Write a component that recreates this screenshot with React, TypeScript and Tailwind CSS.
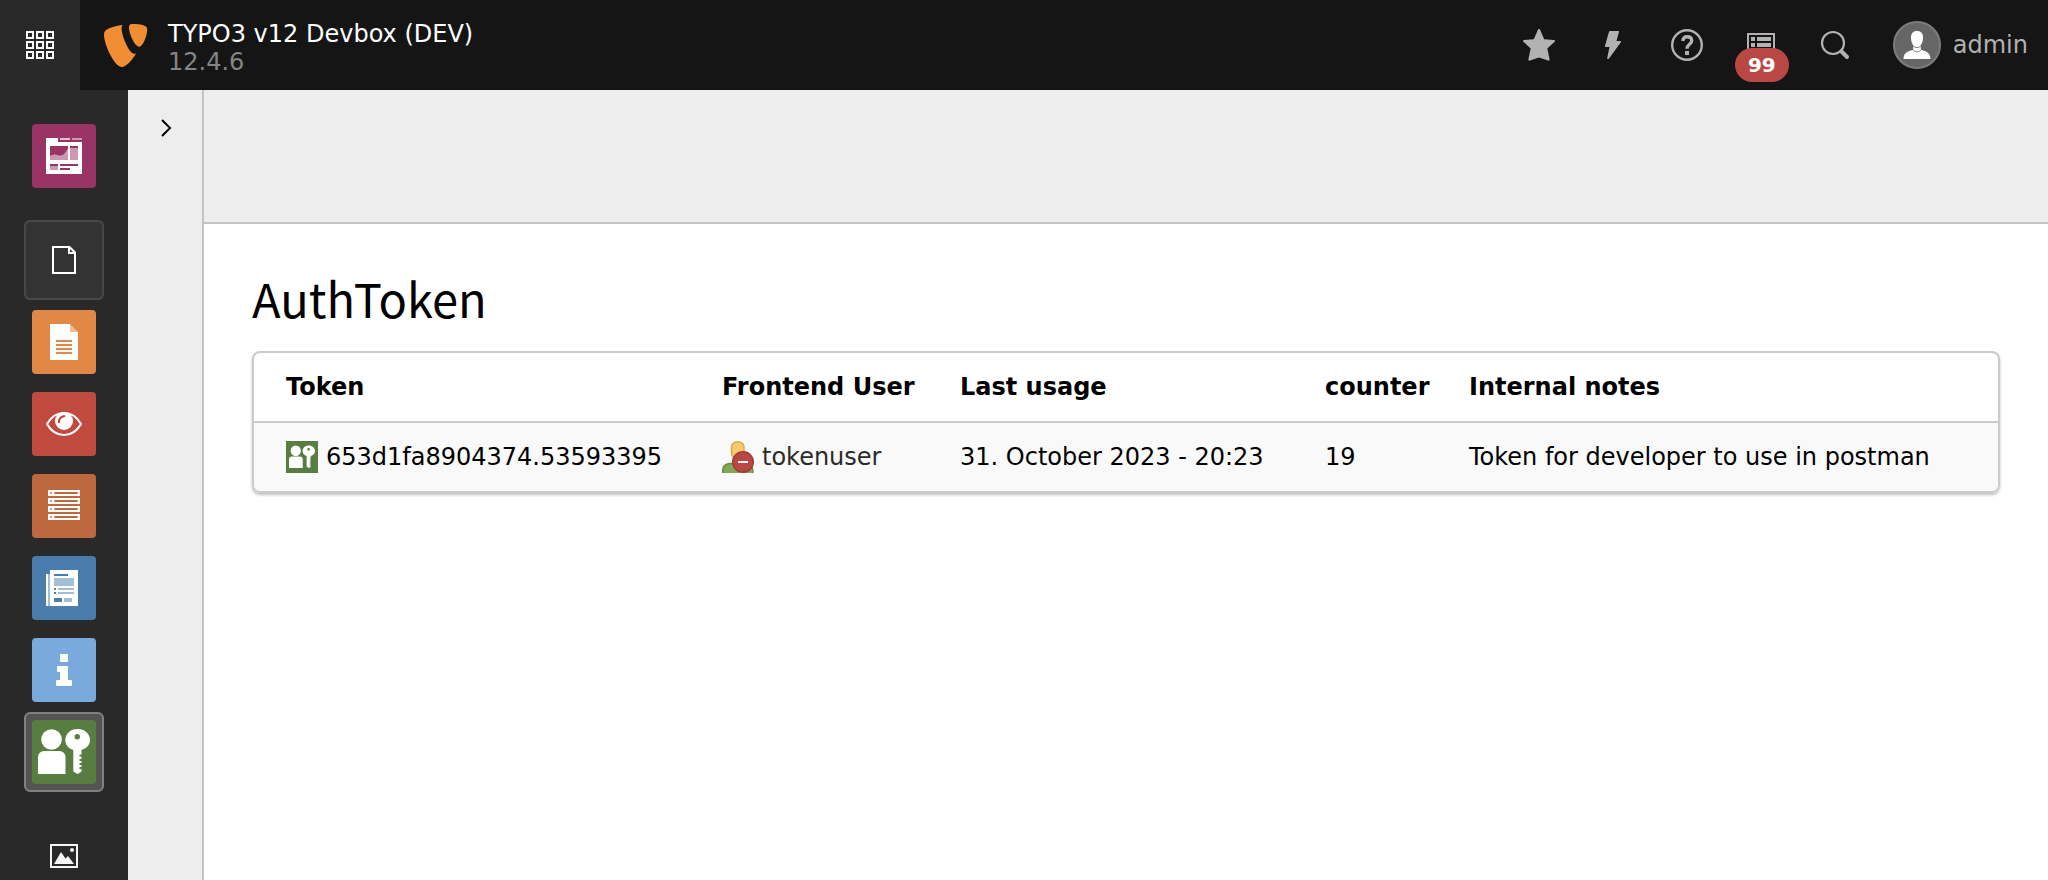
import { ReactNode } from "react";

interface ModuleItem {
    id: string;
    label: string;
    icon: ReactNode;
    boxClass?: string;
}

function Typo3Logo() {
    return (
        <svg className="w-11 h-11.5" viewBox="0 0 44 46" fill="#f18e33" aria-hidden="true">
            <path d="M32.2 31.5c-.6.2-1.2.3-1.8.3C24.8 31.8 17.6 13 17.6 6.8c0-2.5.5-3.2 1.3-3.8C11.8 3.8 3.5 6.1.9 9.2.3 10 0 11.2 0 12.7 0 22.5 10.4 45 18 45c3.500 0 9.300-5.700 14.200-13.500z" />
            <path d="M29 2c6.700 0 14.200 1.100 14.200 5.100 0 8-5 17.600-7.700 17.600-4.700 0-10.500-12.800-10.500-19.300C25 2.600 26.100 2 29 2z" />
        </svg>
    );
}

function GridIcon() {
    return (
        <svg className="w-7 h-7" viewBox="0 0 28 28" fill="none" stroke="#fff" strokeWidth="2" aria-hidden="true">
            {[0, 10, 20].map((y) =>
                [0, 10, 20].map((x) => <rect key={`${x}-${y}`} x={x + 1} y={y + 1} width="6" height="6" />)
            )}
        </svg>
    );
}

function DashboardIcon() {
    return (
        <svg className="w-16 h-16" viewBox="0 0 64 64" aria-hidden="true">
            <rect width="64" height="64" rx="4" fill="#9a3366" />
            <path fill="#fff" d="M14 14h12v4h24v32H14z" />
            <path fill="#e1c2d2" d="M28 14h10v2H28z" />
            <path fill="#cc99b3" d="M40 14h10v2H40zM18 22h18v14H18zM38 24h8v12h-8zM18 42h8v4h-8z" />
            <path fill="#9a3366" d="M18 22h18v2c-2 4-4 7-7 7.500-3 .5-4-1.500-6.500-1-1.500.2-3 .8-4.500 1.500zM38 22h8v2h-8zM18 40h8v2h-8zM28 40h18v2H28zM28 44h10v2H28z" />
        </svg>
    );
}

function PageOutlineIcon() {
    return (
        <svg className="w-8 h-8" viewBox="0 0 32 32" aria-hidden="true">
            <path fill="none" stroke="#fff" strokeWidth="2" d="M5 3h16.500L27 8.500V29H5zM21 3v6h6" />
        </svg>
    );
}

function PageIcon() {
    return (
        <svg className="w-16 h-16" viewBox="0 0 64 64" aria-hidden="true">
            <rect width="64" height="64" rx="4" fill="#e28847" />
            <path fill="#fff" d="M18 14h20v8h8v28H18z" />
            <path fill="#f1bc97" d="M38 14l8 8h-8z" />
            <path fill="#e28847" d="M24 30h16v2H24zM24 34h16v2H24zM24 38h16v2H24zM24 42h16v2H24z" />
        </svg>
    );
}

function ViewIcon() {
    return (
        <svg className="w-16 h-16" viewBox="0 0 64 64" aria-hidden="true">
            <rect width="64" height="64" rx="4" fill="#c14a3f" />
            <path fill="none" stroke="#fff" strokeWidth="2" d="M15 32c4-7 10-11 17-11s13 4 17 11c-4 7-10 11-17 11s-13-4-17-11z" />
            <circle cx="32" cy="29" r="9" fill="#fff" />
            <path fill="none" stroke="#c14a3f" strokeWidth="2" d="M27 31c-.500-4 2-6.500 6-7" />
        </svg>
    );
}

function ListIcon() {
    return (
        <svg className="w-16 h-16" viewBox="0 0 64 64" aria-hidden="true">
            <rect width="64" height="64" rx="4" fill="#bd693f" />
            {[16, 24, 32, 40].map((y) => (
                <g key={y}>
                    <rect x="16" y={y} width="32" height="6" fill="#fff" />
                    <rect x="18" y={y + 2} width="2" height="2" fill="#d59c80" />
                    <rect x="22" y={y + 2} width="24" height="2" fill="#d59c80" />
                    <rect x="23" y={y + 2} width="22" height="2" fill="#bd693f" />
                </g>
            ))}
        </svg>
    );
}

function NewsIcon() {
    return (
        <svg className="w-16 h-16" viewBox="0 0 64 64" aria-hidden="true">
            <rect width="64" height="64" rx="4" fill="#4a7dac" />
            <path fill="#fff" d="M14 18h2v32h-2zM18 14h28v36H18z" />
            <path fill="#a4bed6" d="M16 18h2v32h-2zM22 22h20v8H22zM26 32h16v2H26zM26 36h16v2H26zM32 42h8v4h-8z" />
            <path fill="#4a7dac" d="M22 18h14v2H22zM22 32h2v2h-2zM22 36h2v2h-2zM22 42h8v4h-8z" />
        </svg>
    );
}

function InfoIcon() {
    return (
        <svg className="w-16 h-16" viewBox="0 0 64 64" aria-hidden="true">
            <rect width="64" height="64" rx="4" fill="#7aa9dc" />
            <rect x="28" y="16" width="8" height="8" rx="1" fill="#fff" />
            <path fill="#fff" d="M26 28h9a1 1 0 0 1 1 1v13h3a1 1 0 0 1 1 1v4a1 1 0 0 1-1 1H25a1 1 0 0 1-1-1v-4a1 1 0 0 1 1-1h3v-8h-2a1 1 0 0 1-1-1v-4a1 1 0 0 1 1-1z" />
        </svg>
    );
}

function TokenIcon({ className, radius = 0 }: { className: string; radius?: number }) {
    return (
        <svg className={className} viewBox="0 0 64 64" aria-hidden="true">
            <rect width="64" height="64" rx={radius} fill="#587d41" />
            <circle cx="19.5" cy="19.5" r="10.3" fill="#fff" />
            <path fill="#fff" d="M6 54V37a6 6 0 0 1 6-6h15.500a6 6 0 0 1 6 6v17z" />
            <path
                fill="#fff"
                fillRule="evenodd"
                d="M45.500 9C52.500 9 58 13.800 58 20c0 5-3.500 8.500-8.500 10v4.500h-2v2h2v2.500h-2v2h2v2h-2v2h2v2h-2v2h2v2.500L45.500 54 41.300 51.500V30c-4.800-1.500-8-5-8-10 0-6.200 5.200-11 12.200-11zM45.300 14a2.700 2.700 0 1 0 0 5.400 2.700 2.700 0 0 0 0-5.400z"
            />
        </svg>
    );
}

function ImageIcon() {
    return (
        <svg className="w-8 h-8" viewBox="0 0 32 32" aria-hidden="true">
            <rect x="3" y="5" width="26" height="22" fill="none" stroke="#f5f5f5" strokeWidth="2" />
            <path fill="#f5f5f5" d="M6 24l7-12 4.500 6.500L20 16l6 8z" />
            <circle cx="24" cy="10" r="2" fill="#f5f5f5" />
        </svg>
    );
}

function FrontendUserIcon() {
    return (
        <svg className="w-8 h-8" viewBox="0 0 32 32" aria-hidden="true">
            <path fill="#83a657" stroke="#6a8a45" strokeWidth="1.5" d="M.8 32v-3c0-4 3-6 7-6.500h16c4 .5 7 2.500 7 6.500v3" />
            <path fill="#f9cb6c" stroke="#d2a95a" strokeWidth="1.5" d="M9.500 6.500C9.500 3 12 .8 15.700.8S22 3 22 6.500v5c0 2.500-.7 4-1.500 5V23h-9v-6.500c-1-1-2-2.500-2-5z" />
            <circle cx="21" cy="21" r="10.3" fill="#b94743" stroke="#a03b38" strokeWidth="1.4" />
            <path fill="#fff" d="M16 20h10v2H16z" />
        </svg>
    );
}

const moduleGroups: ModuleItem[][] = [
    [{ id: "dashboard", label: "Dashboard", icon: <DashboardIcon /> }],
    [
        { id: "web", label: "Web", icon: <PageOutlineIcon />, boxClass: "border-[#484848] bg-[#333333]" },
        { id: "page", label: "Page", icon: <PageIcon /> },
        { id: "view", label: "View", icon: <ViewIcon /> },
        { id: "list", label: "List", icon: <ListIcon /> },
        { id: "news", label: "News", icon: <NewsIcon /> },
        { id: "info", label: "Info", icon: <InfoIcon /> },
        {
            id: "authtoken",
            label: "AuthToken",
            icon: <TokenIcon className="w-16 h-16" radius={4} />,
            boxClass: "border-[#808080] bg-[#535353]",
        },
    ],
    [{ id: "file", label: "File", icon: <ImageIcon /> }],
];

const tokens = [
    {
        token: "653d1fa8904374.53593395",
        user: "tokenuser",
        lastUsage: "31. October 2023 - 20:23",
        counter: 19,
        notes: "Token for developer to use in postman",
    },
];

function Topbar() {
    return (
        <header className="flex items-center h-[90px] shrink-0 bg-[#151515] text-[#b2b2b2]">
            <button type="button" aria-label="Toggle module menu" className="flex items-center justify-center w-20 h-full bg-[#292929]">
                <GridIcon />
            </button>
            <a href="#" className="flex items-center gap-5 pl-6 text-white">
                <Typo3Logo />
                <span className="flex flex-col pt-1.5 leading-7">
                    <span>TYPO3 v12 Devbox (DEV)</span>
                    <span className="text-[#858585]">12.4.6</span>
                </span>
            </a>

            <div className="flex items-center h-full ml-auto">
                <button type="button" aria-label="Bookmarks" className="flex items-center justify-center w-[74px] h-full">
                    <svg className="w-8 h-8" viewBox="0 0 32 32" fill="#b2b2b2" aria-hidden="true">
                        <path d="M17 .6l4.200 9.600 9.800.8c1 .1 1.300 1 .6 1.700l-7.300 6.800 2.300 10.800c.2 1-.6 1.700-1.600 1.200L16 28.600l-9 2.900c-1 .5-1.800-.2-1.600-1.200l2.300-10.800L.4 12.700c-.7-.7-.4-1.600.6-1.700l9.800-.8L15 .6c.5-.9 1.500-.9 2 0z" />
                    </svg>
                </button>
                <button type="button" aria-label="Clear cache" className="flex items-center justify-center w-[74px] h-full">
                    <svg className="w-8 h-8" viewBox="0 0 32 32" fill="#b2b2b2" aria-hidden="true">
                        <path d="M13 2h8.500c.5 0 .7.3.5.8L19.500 12H23c1 0 1.200.6.7 1.400L12 29.500c-.6.8-2 .6-1.800-.5L12.500 18H9c-.8 0-1.200-.4-1-1.200L12 2.800c.2-.5.5-.8 1-.8z" />
                    </svg>
                </button>
                <button type="button" aria-label="Help" className="flex items-center justify-center w-[74px] h-full">
                    <svg className="w-8 h-8" viewBox="0 0 32 32" fill="none" stroke="#b2b2b2" aria-hidden="true">
                        <circle cx="16" cy="16" r="14.8" strokeWidth="2.4" />
                        <path strokeWidth="3.4" d="M11.800 12c.3-3 2-4.300 4.400-4.300 2.800 0 4.500 1.500 4.500 4 0 3.700-4.700 3.500-4.700 8" />
                        <path strokeWidth="4" d="M16 22v4" />
                    </svg>
                </button>
                <button type="button" aria-label="System information, 99 messages" className="relative flex items-center justify-center w-[74px] h-full">
                    <svg className="w-8 h-8" viewBox="0 0 32 32" aria-hidden="true">
                        <rect x="3" y="5" width="26" height="22" fill="none" stroke="#b2b2b2" strokeWidth="2" />
                        <path fill="#b2b2b2" d="M6 8h4v4H6zM12 8h14v4H12zM6 14h4v4H6zM12 14h14v4H12zM6 20h4v4H6zM12 20h14v4H12z" />
                    </svg>
                    <span className="absolute top-12 left-[11px] w-[54px] h-[34px] rounded-full bg-[#b94743] text-center text-xl leading-[34px] font-bold text-white">
                        99
                    </span>
                </button>
                <button type="button" aria-label="Search" className="flex items-center justify-center w-[74px] h-full">
                    <svg className="w-8 h-8" viewBox="0 0 32 32" fill="none" stroke="#b2b2b2" strokeLinecap="round" aria-hidden="true">
                        <circle cx="14" cy="14" r="11" strokeWidth="2.2" />
                        <path strokeWidth="4" d="M22.500 22.500L28 28" />
                    </svg>
                </button>
                <button type="button" className="flex items-center gap-3 h-full pl-[21px] pr-5">
                    <svg className="w-12 h-12" viewBox="0 0 48 48" aria-hidden="true">
                        <circle cx="24" cy="24" r="23" fill="#666" stroke="#7c7c7c" strokeWidth="2" />
                        <path fill="#fff" d="M24 10c4 0 6 2.500 6 6.500 0 3.500-.7 5.500-2.200 7.500v4.500c2 1.500 9.700 1.500 9.700 9.500h-27c0-8 7.700-8 9.700-9.500V24c-1.500-2-2.200-4-2.200-7.500 0-4 2-6.500 6-6.500z" />
                        <path fill="none" stroke="#666" strokeWidth=".8" d="M20 25c2.500 2 5.500 2 8 0M19.500 28.500c2 3 7 3 9 0" />
                    </svg>
                    <span>admin</span>
                </button>
            </div>
        </header>
    );
}

function ModuleMenu() {
    return (
        <nav aria-label="Module menu" className="flex flex-col items-center gap-6 w-32 shrink-0 pt-[26px] bg-[#292929] overflow-hidden">
            {moduleGroups.map((group, index) => (
                <div key={index} className="flex flex-col gap-0.5">
                    {group.map((item) => (
                        <button
                            key={item.id}
                            type="button"
                            aria-label={item.label}
                            className={`flex items-center justify-center w-20 h-20 rounded-md border-2 ${item.boxClass ?? "border-transparent"}`}
                        >
                            {item.icon}
                        </button>
                    ))}
                </div>
            ))}
        </nav>
    );
}

function TokenTable() {
    return (
        <div className="rounded-lg border-2 border-[#cbcbcb] overflow-hidden shadow-[0_2px_3px_rgba(0,0,0,0.25)]">
            <table className="w-full table-fixed text-left leading-9">
                <thead>
                    <tr className="border-b-2 border-[#cbcbcb]">
                        <th className="w-[448px] py-4 pl-8">Token</th>
                        <th className="w-[238px] py-4 pl-5 whitespace-nowrap">Frontend User</th>
                        <th className="w-[365px] py-4 pl-5">Last usage</th>
                        <th className="w-36 py-4 pl-5">counter</th>
                        <th className="py-4 pl-5">Internal notes</th>
                    </tr>
                </thead>
                <tbody>
                    {tokens.map((row) => (
                        <tr key={row.token} className="bg-[#f9f9f9]">
                            <td className="py-4 pl-8">
                                <span className="flex items-center gap-2">
                                    <TokenIcon className="w-8 h-8" />
                                    {row.token}
                                </span>
                            </td>
                            <td className="py-4 pl-5">
                                <a href="#" className="flex items-center gap-2 text-[#2b2b2b]">
                                    <FrontendUserIcon />
                                    {row.user}
                                </a>
                            </td>
                            <td className="py-4 pl-5">{row.lastUsage}</td>
                            <td className="py-4 pl-5">{row.counter}</td>
                            <td className="py-4 pl-5 whitespace-nowrap">{row.notes}</td>
                        </tr>
                    ))}
                </tbody>
            </table>
        </div>
    );
}

export default function App() {
    return (
        <div className="flex flex-col h-screen overflow-hidden bg-white text-2xl text-black font-['Verdana','DejaVu_Sans',sans-serif]">
            <Topbar />
            <div className="flex flex-1 min-h-0">
                <ModuleMenu />

                {/* Collapsed page tree */}
                <aside className="w-[76px] shrink-0 border-r-2 border-[#c3c3c3] bg-[#ededed]">
                    <button type="button" aria-label="Expand page tree" className="flex items-center justify-center w-full h-19">
                        <svg className="w-6 h-6" viewBox="0 0 24 24" fill="none" stroke="#000" strokeWidth="2" aria-hidden="true">
                            <path d="M9 4l8 8-8 8" />
                        </svg>
                    </button>
                </aside>

                <main className="flex flex-col flex-1 min-w-0">
                    <div className="h-[134px] shrink-0 border-b-2 border-[#c3c3c3] bg-[#ededed]" />
                    <div className="px-12 pt-11">
                        <h1 className="mb-6 text-[47px] leading-[59px] font-['Noto_Sans_CJK_SC',sans-serif]">AuthToken</h1>
                        <TokenTable />
                    </div>
                </main>
            </div>
        </div>
    );
}
